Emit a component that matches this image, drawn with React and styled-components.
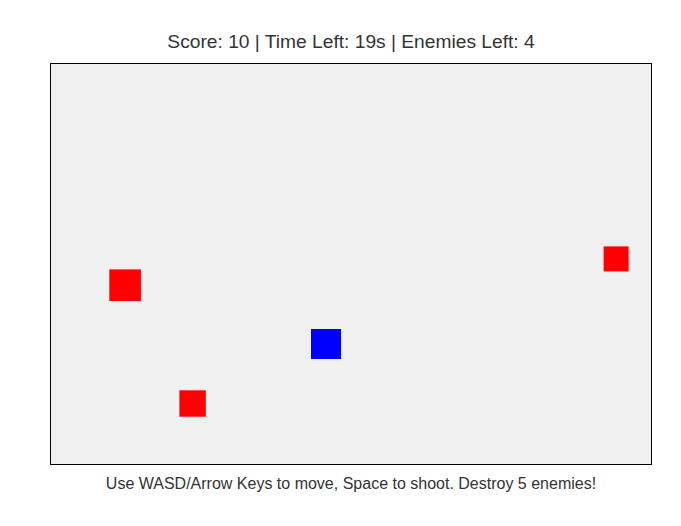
import React from 'react'
import styled, {createGlobalStyle} from 'styled-components'

const GlobalStyle = createGlobalStyle`
  html, body {
    margin: 0;
    padding: 0;
    background: #ffffff;
    overflow: hidden;
  }
  body {
    font-family: "Liberation Sans", Arial, sans-serif;
  }
`;

const enemies = [
  {id: 1, x: 58.3, y: 205.4, size: 31.6},
  {id: 2, x: 128.4, y: 326.3, size: 26.4},
  {id: 3, x: 552.6, y: 182.4, size: 25},
]

const player = {x: 260, y: 265, size: 30}

const App = () => {
  const score = 10
  const timeLeft = 19
  const enemiesLeft = 4

  return (
    <Page>
      <GlobalStyle />
      <Hud>
        Score: {score} | Time Left: {timeLeft}s | Enemies Left: {enemiesLeft}
      </Hud>

      <Field>
        <svg width="600" height="400" viewBox="0 0 600 400">
          {enemies.map(e => (
            <rect key={e.id} x={e.x} y={e.y} width={e.size} height={e.size} fill="#ff0000" />
          ))}
          <rect x={player.x} y={player.y} width={player.size} height={player.size} fill="#0000ff" />
        </svg>
      </Field>

      <Instructions>
        Use WASD/Arrow Keys to move, Space to shoot. Destroy 5 enemies!
      </Instructions>
    </Page>
  )
}

export default App

const Page = styled.div`
  width: 681px;
  box-sizing: border-box;
  padding: 31px 0 0 21px;
  display: flex;
  flex-direction: column;
  align-items: center;
`;

const Hud = styled.div`
  font-size: 19.2px;
  line-height: 22px;
  color: #333333;
  margin-bottom: 10px;
  white-space: nowrap;
`;

const Field = styled.div`
  width: 600px;
  height: 400px;
  border: 1px solid #000000;
  background-color: #f0f0f0;

  svg {
    display: block;
  }
`;

const Instructions = styled.div`
  margin-top: 10px;
  font-size: 16px;
  line-height: 18px;
  color: #333333;
  white-space: nowrap;
`;
